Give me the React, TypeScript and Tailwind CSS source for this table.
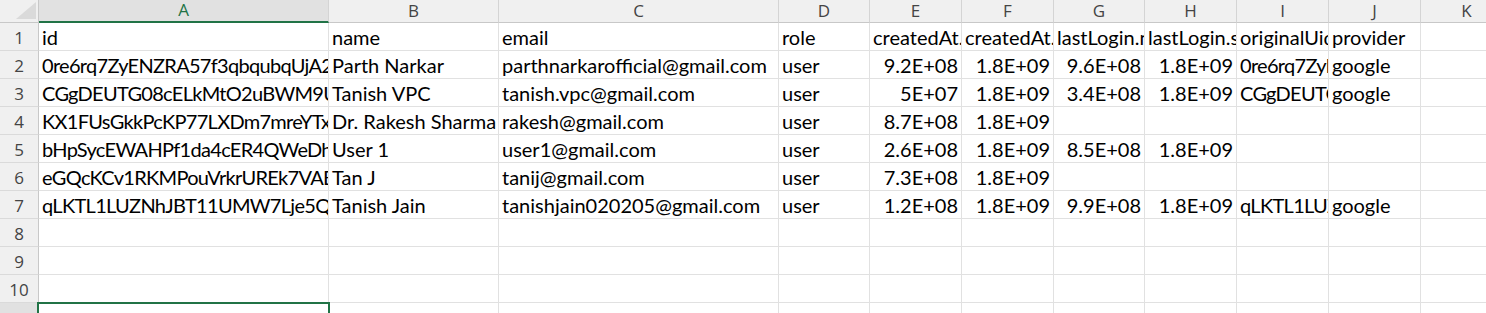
import React from "react";

const cols = ["A", "B", "C", "D", "E", "F", "G", "H", "I", "J", "K"];
const widths = ["w-[290px]", "w-[170px]", "w-[280px]", "w-[91px]", "w-[92px]", "w-[92px]", "w-[91px]", "w-[92px]", "w-[92px]", "w-[92px]", "w-[92px]"];

type Cell = { t: string; r?: boolean; id?: boolean };

const header: Cell[] = [
  { t: "id" },
  { t: "name" },
  { t: "email" },
  { t: "role" },
  { t: "createdAt._nanoseconds" },
  { t: "createdAt._seconds" },
  { t: "lastLogin.nanoseconds" },
  { t: "lastLogin.seconds" },
  { t: "originalUid" },
  { t: "provider" },
  { t: "" },
];

const rows: Cell[][] = [
  header,
  [
    { t: "0re6rq7ZyENZRA57f3qbqubqUjA2x1", id: true },
    { t: "Parth Narkar" },
    { t: "parthnarkarofficial@gmail.com" },
    { t: "user" },
    { t: "9.2E+08", r: true },
    { t: "1.8E+09", r: true },
    { t: "9.6E+08", r: true },
    { t: "1.8E+09", r: true },
    { t: "0re6rq7ZyENZRA57f3qbqubqUjA2x1", id: true },
    { t: "google" },
    { t: "" },
  ],
  [
    { t: "CGgDEUTG08cELkMtO2uBWM9Uq1Zk", id: true },
    { t: "Tanish VPC" },
    { t: "tanish.vpc@gmail.com" },
    { t: "user" },
    { t: "5E+07", r: true },
    { t: "1.8E+09", r: true },
    { t: "3.4E+08", r: true },
    { t: "1.8E+09", r: true },
    { t: "CGgDEUTG08cELkMtO2uBWM9Uq1Zk", id: true },
    { t: "google" },
    { t: "" },
  ],
  [
    { t: "KX1FUsGkkPcKP77LXDm7mreYTxQ2", id: true },
    { t: "Dr. Rakesh Sharma" },
    { t: "rakesh@gmail.com" },
    { t: "user" },
    { t: "8.7E+08", r: true },
    { t: "1.8E+09", r: true },
    { t: "" },
    { t: "" },
    { t: "" },
    { t: "" },
    { t: "" },
  ],
  [
    { t: "bHpSycEWAHPf1da4cER4QWeDh2Lm", id: true },
    { t: "User 1" },
    { t: "user1@gmail.com" },
    { t: "user" },
    { t: "2.6E+08", r: true },
    { t: "1.8E+09", r: true },
    { t: "8.5E+08", r: true },
    { t: "1.8E+09", r: true },
    { t: "" },
    { t: "" },
    { t: "" },
  ],
  [
    { t: "eGQcKCv1RKMPouVrkrUREk7VABn3", id: true },
    { t: "Tan J" },
    { t: "tanij@gmail.com" },
    { t: "user" },
    { t: "7.3E+08", r: true },
    { t: "1.8E+09", r: true },
    { t: "" },
    { t: "" },
    { t: "" },
    { t: "" },
    { t: "" },
  ],
  [
    { t: "qLKTL1LUZNhJBT11UMW7Lje5QFa8", id: true },
    { t: "Tanish Jain" },
    { t: "tanishjain020205@gmail.com" },
    { t: "user" },
    { t: "1.2E+08", r: true },
    { t: "1.8E+09", r: true },
    { t: "9.9E+08", r: true },
    { t: "1.8E+09", r: true },
    { t: "qLKTL1LUZNhJBT11UMW7Lje5QFa8", id: true },
    { t: "google" },
    { t: "" },
  ],
];

const empty: Cell[] = cols.map(() => ({ t: "" }));
const allRows = [...rows, empty, empty, empty];

const cellFont = { fontFamily: "Lato, 'Open Sans', sans-serif" };
const headFont = { fontFamily: "'Open Sans', 'Noto Sans', sans-serif" };

export default function App() {
  return (
    <div className="relative w-[1486px] h-[313px] overflow-hidden bg-white">
      {/* column headers */}
      <div className="flex h-[23px]">
        <div className="w-[39px] shrink-0 h-[23px] bg-[#f0f0f0] border-r border-b border-[#c8c8c8] flex items-end justify-end pr-[2px] pb-[3px]">
          <svg width="20" height="17" viewBox="0 0 20 17">
            <polygon points="20,0 20,17 0,17" fill="#dadada" />
          </svg>
        </div>
        {cols.map((c, i) => (
          <div
            key={c}
            style={headFont}
            className={
              i === 0
                ? `${widths[i]} shrink-0 h-[23px] bg-[#e1e1e1] border-r border-[#d4d4d4] border-b-2 border-b-[#217346] flex items-center justify-center text-[17px] leading-none text-[#217346] pb-[3px]`
                : `${widths[i]} shrink-0 h-[23px] bg-[#f0f0f0] border-r border-[#d4d4d4] border-b border-b-[#c8c8c8] flex items-center justify-center text-[17px] leading-none text-[#444] pb-[2px]`
            }
          >
            {c}
          </div>
        ))}
      </div>
      {/* rows */}
      {allRows.map((row, ri) => (
        <div key={ri} className="flex h-[28px]">
          <div
            style={headFont}
            className="w-[39px] shrink-0 h-[28px] bg-[#f0f0f0] border-r border-b border-r-[#c8c8c8] border-b-[#dadada] flex items-center justify-center text-[17px] leading-none text-[#444] pt-[2px]"
          >
            {ri + 1}
          </div>
          {row.map((cell, ci) => (
            <div
              key={ci}
              style={cellFont}
              className={`${widths[ci]} shrink-0 h-[28px] border-r border-b border-[#e1e1e1] overflow-hidden whitespace-nowrap flex items-end text-[20px] leading-none text-black pb-[3px] ${
                cell.r ? "justify-end pr-[3px]" : "justify-start pl-[3px]"
              } ${cell.id ? "tracking-[-0.7px]" : ""}`}
            >
              {cell.t}
            </div>
          ))}
        </div>
      ))}
      {/* row 11 */}
      <div className="flex h-[28px]">
        <div
          style={headFont}
          className="w-[39px] shrink-0 h-[28px] bg-[#e1e1e1] border-r border-r-[#c8c8c8] flex items-center justify-center text-[17px] leading-none text-[#444] pt-[2px]"
        >
          11
        </div>
        {cols.map((c, i) => (
          <div key={c} className={`${widths[i]} shrink-0 h-[28px] border-r border-[#e1e1e1]`} />
        ))}
      </div>
      {/* selection box on A11 */}
      <div className="absolute left-[37px] top-[302px] w-[293px] h-[40px] border-2 border-[#217346]" />
    </div>
  );
}
